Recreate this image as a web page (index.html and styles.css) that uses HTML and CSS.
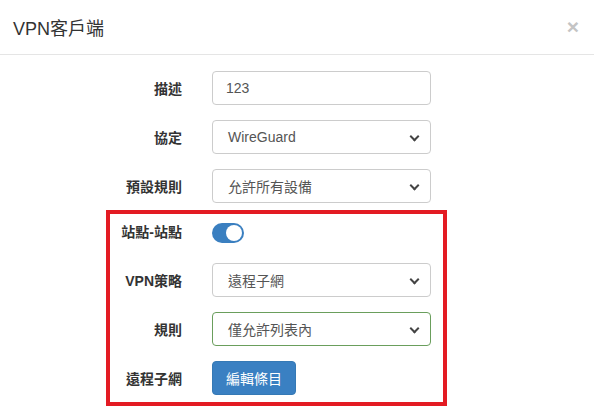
FILE: index.html
```html
<!DOCTYPE html>
<html lang="zh-Hant">
<head>
  <meta charset="UTF-8">
  <title>VPN客戶端</title>
  <link rel="stylesheet" href="styles.css">
</head>
<body>

<!-- MODAL -->
<div class="modal">
  <div class="modal-header">
    <h4 class="modal-title">VPN客戶端</h4>
    <span class="close">&times;</span>
  </div>

  <div class="modal-body">
    <div class="form-row">
      <label class="form-label">描述</label>
      <input class="form-control" type="text" value="123">
    </div>
    <div class="form-row">
      <label class="form-label">協定</label>
      <div class="select">WireGuard</div>
    </div>
    <div class="form-row last">
      <label class="form-label">預設規則</label>
      <div class="select">允許所有設備</div>
    </div>

    <!-- 站點-站點 區塊 -->
    <div class="highlight">
      <div class="form-row">
        <label class="form-label">站點-站點</label>
        <span class="switch on"><span class="knob"></span></span>
      </div>
      <div class="form-row">
        <label class="form-label">VPN策略</label>
        <div class="select">遠程子網</div>
      </div>
      <div class="form-row">
        <label class="form-label">規則</label>
        <div class="select success">僅允許列表內</div>
      </div>
      <div class="form-row">
        <label class="form-label">遠程子網</label>
        <button class="btn-primary">編輯條目</button>
      </div>
    </div>
  </div>
</div>

</body>
</html>
```

FILE: styles.css
```css
body { margin: 0; padding: 0; background: #fff; font-family: "Liberation Sans", Arial, "Noto Sans CJK TC", sans-serif; color: #333; font-size: 14px; }

/* ESTILOS DO MODAL */
.modal { width: 594px; }
.modal-header {
  display: flex;
  justify-content: space-between;
  align-items: center;
  height: 55px;
  padding: 0 15px 0 13px;
  border-bottom: 1px solid #e5e5e5;
  box-sizing: border-box;
}
.modal-title { margin: 0; font-size: 18px; font-weight: normal; color: #333; }
.close { font-size: 21px; font-weight: bold; color: #c4c4c4; line-height: 1; margin-top: -2px; }

.modal-body { padding: 16px 0 0 110px; }

/* LINHAS DO FORMULARIO */
.form-row { display: flex; align-items: center; height: 34px; margin-bottom: 15px; }
.form-row.last { margin-bottom: 7px; }
.form-label { width: 72px; margin-right: 30px; text-align: right; font-weight: bold; font-size: 14px; color: #333; }

.form-control, .select {
  width: 219px;
  height: 34px;
  box-sizing: border-box;
  border: 1px solid #ccc;
  border-radius: 4px;
  font-family: inherit;
  font-size: 14px;
  color: #555;
  background: #fff;
}
.form-control { padding: 0 13px; }
.select {
  position: relative;
  display: flex;
  align-items: center;
  padding-left: 15px;
}
.select::after {
  content: "";
  position: absolute;
  right: 12px;
  top: 12px;
  width: 5px;
  height: 5px;
  border-right: 2px solid #444;
  border-bottom: 2px solid #444;
  transform: rotate(45deg);
}
.select.success { border-color: #6a9e5c; }

/* CAIXA VERMELHA */
.highlight {
  width: 333px;
  margin-left: -4px;
  padding: 0 0 7px 0;
  border: 4px solid #e31b23;
}
.highlight .form-row:last-child { margin-bottom: 0; }

.switch {
  position: relative;
  display: inline-block;
  width: 32px;
  height: 20px;
  border-radius: 10px;
  background: #3a7fc0;
  margin-top: 3px;
}
.switch .knob {
  position: absolute;
  right: 2px;
  top: 2px;
  width: 16px;
  height: 16px;
  border-radius: 50%;
  background: #fff;
}

.btn-primary {
  height: 34px;
  padding: 0 13px;
  border: 1px solid #3579b5;
  border-radius: 4px;
  background: #3a80c2;
  color: #fff;
  font-family: inherit;
  font-size: 14px;
}
```
